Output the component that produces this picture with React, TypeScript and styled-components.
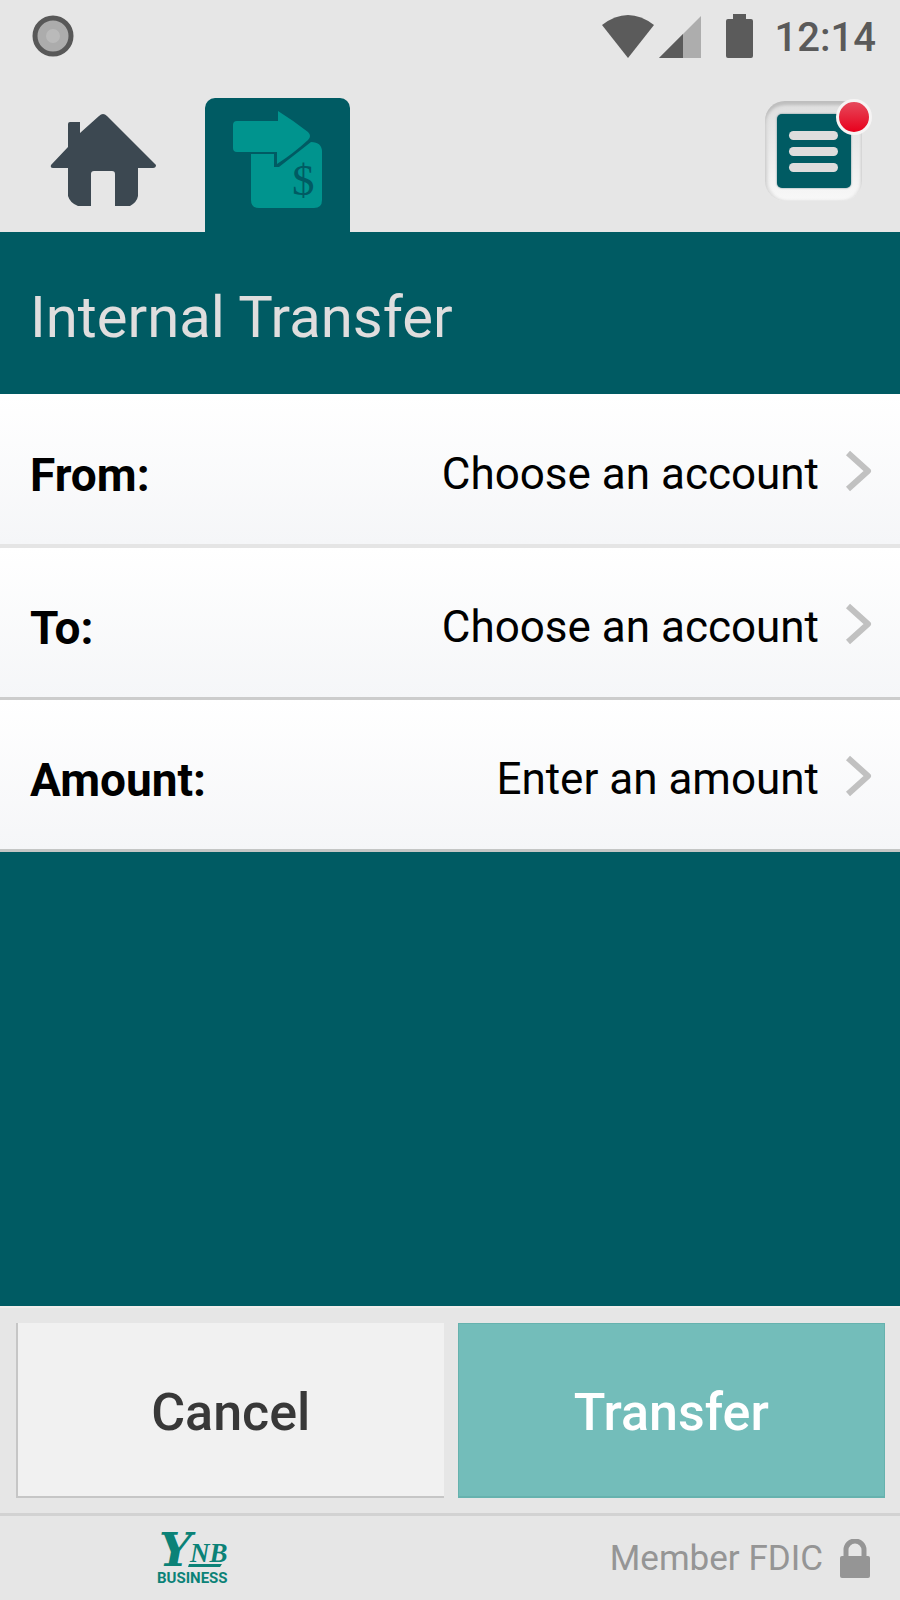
import React from 'react';
import styled, { createGlobalStyle } from 'styled-components';

const teal = '#005b63';
const chrome = '#e6e6e6';

const GlobalStyle = createGlobalStyle`
  *, *::before, *::after { box-sizing: border-box; }
  body { margin: 0; background: ${chrome}; font-family: Roboto, "Noto Sans", sans-serif; }
  button { font-family: inherit; border: 0; padding: 0; margin: 0; background: none; cursor: pointer; }
  svg { display: block; }
`;

const Screen = styled.div`
  display: flex;
  flex-direction: column;
  min-height: 100vh;
  background: ${chrome};
`;

const StatusBar = styled.div`
  display: flex;
  align-items: center;
  height: 72px;
  padding: 0 24px 0 32px;
`;

const StatusIcons = styled.div`
  display: flex;
  align-items: center;
  margin-left: auto;
`;

const Clock = styled.time`
  margin-left: 20px;
  padding-top: 4px;
  color: #5a5a5a;
  font-size: 40px;
  line-height: 48px;
  font-weight: 500;
`;

const NavBar = styled.nav`
  display: flex;
  align-items: flex-end;
  gap: 30px;
  height: 160px;
  padding: 0 38px 0 30px;
`;

const Tab = styled.button<{ $active?: boolean }>`
  display: flex;
  justify-content: center;
  width: 145px;
  height: 134px;
  padding-top: 12px;
  border-radius: 10px 10px 0 0;
  background: ${({ $active }) => ($active ? teal : 'transparent')};
`;

const MenuButton = styled.button`
  position: relative;
  display: flex;
  align-items: center;
  justify-content: center;
  width: 97px;
  height: 100px;
  margin: 0 0 31px auto;
  border-radius: 20px;
  background: linear-gradient(#dedede, #f8f8f8);
  box-shadow: inset 0 4px 3px #bebebe, inset 3px 0 3px #dddddd, inset -2px 0 3px #e4e4e4;
`;

const MenuFace = styled.span`
  display: flex;
  flex-direction: column;
  align-items: center;
  justify-content: center;
  gap: 7px;
  width: 74px;
  height: 74px;
  border-radius: 5px;
  background: ${teal};
  box-shadow: 0 0 2px #5f8288;
`;

const MenuLine = styled.span`
  width: 49px;
  height: 9px;
  border-radius: 5px;
  background: #dedddd;
`;

const Badge = styled.span`
  position: absolute;
  top: -2px;
  right: -10px;
  width: 36px;
  height: 36px;
  border: 3px solid #f6f4f4;
  border-radius: 50%;
  background: linear-gradient(#e64a5c, #e8001c);
`;

const TitleBand = styled.header`
  display: flex;
  align-items: center;
  height: 162px;
  padding: 8px 30px 0;
  background: ${teal};
`;

const Title = styled.h1`
  margin: 0;
  color: #e0dede;
  font-size: 58px;
  line-height: 72px;
  font-weight: 400;
`;

const FieldList = styled.div`
  display: flex;
  flex-direction: column;
  padding-top: 2px;
  background: #ffffff;
`;

const Field = styled.button<{ $line: string; $thick?: boolean }>`
  display: flex;
  align-items: center;
  width: 100%;
  height: 152px;
  padding: 2px 28px 0 30px;
  border-bottom: ${({ $thick }) => ($thick ? 4 : 3)}px solid ${({ $line }) => $line};
  background: linear-gradient(#ffffff, #f5f6f8);
  color: #000000;
  font-size: 44px;
  line-height: 52px;
  text-align: left;
`;

const FieldName = styled.span`
  padding-top: 8px;
  font-size: 46px;
  font-weight: 700;
`;

const FieldValue = styled.span`
  margin: 0 26px 0 auto;
  padding-top: 6px;
`;

const Body = styled.main`
  display: flex;
  flex: 1;
  flex-direction: column;
  background: ${teal};
`;

const Actions = styled.div`
  display: grid;
  grid-template-columns: 1fr 1fr;
  gap: 14px;
  padding: 15px 15px 15px 16px;
  border-top: 2px solid #f0edeb;
  border-bottom: 3px solid #d2d2d2;
`;

const ActionButton = styled.button<{ $primary?: boolean }>`
  height: 175px;
  padding-top: 6px;
  font-size: 52px;
  line-height: 64px;
  font-weight: 500;
  color: ${({ $primary }) => ($primary ? '#ffffff' : '#383838')};
  background: ${({ $primary }) => ($primary ? '#73bdba' : '#f1f1f1')};
  border: solid ${({ $primary }) => ($primary ? '#66b2ae' : '#c6c6c6')};
  border-width: ${({ $primary }) => ($primary ? '1px 1px 2px' : '0 0 2px 2px')};
`;

const Footer = styled.footer`
  display: flex;
  align-items: center;
  justify-content: space-between;
  height: 84px;
  padding: 0 30px 0 152px;
`;

const Member = styled.div`
  display: flex;
  align-items: center;
  gap: 17px;
  padding-top: 2px;
  color: #959595;
  font-size: 35px;
  line-height: 44px;
`;

const fields = [
  { name: 'From:', value: 'Choose an account', line: '#e5e5e5', thick: true },
  { name: 'To:', value: 'Choose an account', line: '#cccccc' },
  { name: 'Amount:', value: 'Enter an amount', line: '#c4c6c5' },
];

const RecordIcon = () => (
  <svg width="42" height="42" viewBox="0 0 42 42" aria-hidden="true">
    <circle cx="21" cy="21" r="18" fill="#acacac" stroke="#585858" strokeWidth="5" />
    <circle cx="21" cy="21" r="7" fill="#bababa" />
  </svg>
);

const SignalIcons = () => (
  <svg width="154" height="46" viewBox="600 12 154 46" aria-hidden="true">
    <path d="M601 24Q627 4 653 24L627 57Z" fill="#5b5b5b" />
    <path d="M700 15V57H658Z" fill="#adadad" />
    <path d="M682 33V57H658Z" fill="#5b5b5b" />
    <path d="M732 13h13v5h5q2 0 2 2v35q0 2-2 2h-23q-2 0-2-2V20q0-2 2-2h5z" fill="#5b5b5b" />
  </svg>
);

const HomeIcon = () => (
  <svg width="108" height="98" viewBox="49 109 108 98" aria-hidden="true">
    <path
      d="M99 115Q103 111 107 115L156 164Q156 167 153 167H138V195Q137 201 130 205H115V173Q115 170 112 170H94Q91 170 91 173V205H78Q70 202 68 195V167H53Q50 167 51 164L68 146V123Q68 121 70 121H80V132Z"
      fill="#3c4851"
    />
  </svg>
);

const TransferIcon = () => (
  <svg width="92" height="100" viewBox="232 109 92 100" aria-hidden="true">
    <path
      d="M251 153H274V166H279L311 141Q322 141 322 151V199Q322 207 314 207H259Q251 207 251 199Z"
      fill="#00948e"
    />
    <path
      d="M237 120H278V110Q294 120 308 131Q312 135 308 139Q294 152 277 163V151H237Q233 151 233 147V124Q233 120 237 120Z"
      fill="#00948e"
    />
    <text x="292" y="194" fontFamily="Liberation Serif, serif" fontSize="45" fill={teal}>
      $
    </text>
  </svg>
);

const Chevron = () => (
  <svg width="27" height="42" viewBox="0 0 27 42" aria-hidden="true">
    <path d="M3 3L23 21L3 39" fill="none" stroke="#c1c1c1" strokeWidth="6" strokeLinejoin="round" />
  </svg>
);

const Logo = () => (
  <svg width="80" height="80" viewBox="152 1517 80 80" role="img" aria-label="YNB Business">
    <g fill="#0b8277">
      <text
        x="159"
        y="1565"
        fontFamily="DejaVu Serif, serif"
        fontSize="46"
        fontWeight="700"
        fontStyle="italic"
      >
        Y
      </text>
      <text
        x="190"
        y="1561"
        fontFamily="Liberation Serif, serif"
        fontSize="27"
        fontWeight="700"
        fontStyle="italic"
      >
        NB
      </text>
      <path d="M189 1563H222L220 1566H188Z" />
      <text x="157" y="1582" fontFamily="Roboto, sans-serif" fontSize="15" fontWeight="700">
        BUSINESS
      </text>
    </g>
  </svg>
);

const LockIcon = () => (
  <svg width="30" height="40" viewBox="0 0 30 40" aria-hidden="true">
    <path d="M6 20V11a9 9 0 0 1 18 0v9" fill="none" stroke="#959595" strokeWidth="5" />
    <rect y="17" width="30" height="22" rx="2" fill="#959595" />
  </svg>
);

export default function App() {
  return (
    <Screen>
      <GlobalStyle />
      <StatusBar>
        <RecordIcon />
        <StatusIcons>
          <SignalIcons />
          <Clock>12:14</Clock>
        </StatusIcons>
      </StatusBar>
      <NavBar>
        <Tab aria-label="Home">
          <HomeIcon />
        </Tab>
        <Tab $active aria-label="Transfers">
          <TransferIcon />
        </Tab>
        <MenuButton aria-label="Menu">
          <MenuFace>
            <MenuLine />
            <MenuLine />
            <MenuLine />
          </MenuFace>
          <Badge />
        </MenuButton>
      </NavBar>
      <Body>
        <TitleBand>
          <Title>Internal Transfer</Title>
        </TitleBand>
        <FieldList>
          {fields.map((field) => (
            <Field key={field.name} $line={field.line} $thick={field.thick}>
              <FieldName>{field.name}</FieldName>
              <FieldValue>{field.value}</FieldValue>
              <Chevron />
            </Field>
          ))}
        </FieldList>
      </Body>
      <Actions>
        <ActionButton>Cancel</ActionButton>
        <ActionButton $primary>Transfer</ActionButton>
      </Actions>
      <Footer>
        <Logo />
        <Member>
          Member FDIC
          <LockIcon />
        </Member>
      </Footer>
    </Screen>
  );
}
